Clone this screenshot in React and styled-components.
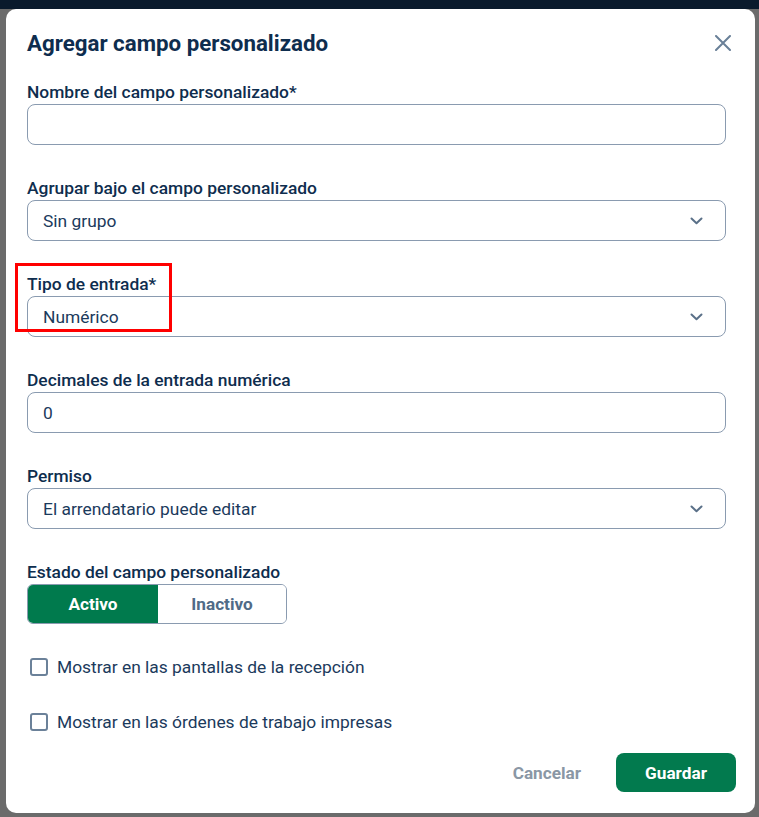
import React from "react";
import styled, { createGlobalStyle } from "styled-components";

const Global = createGlobalStyle`
  html, body { margin: 0; padding: 0; }
  body { font-family: Roboto, "Noto Sans", "Liberation Sans", sans-serif; }
  * { box-sizing: border-box; }
`;

const Backdrop = styled.div`
  width: 759px;
  height: 817px;
  background: linear-gradient(#0a1a2c 0 9px, #6b6b6b 9px 100%);
  padding: 9px 4px 4px 6px;
  display: flex;
  position: relative;
  overflow: hidden;
`;

const Modal = styled.div`
  flex: 1;
  background: #fff;
  border-radius: 10px;
  display: flex;
  flex-direction: column;
  padding: 20px 0 21px 21px;
`;

const Header = styled.div`
  display: flex;
  align-items: center;
  justify-content: space-between;
  padding-right: 24px;
  height: 28px;
`;

const Title = styled.h2`
  margin: 0;
  font-size: 22.3px;
  line-height: 28px;
  font-weight: 700;
  color: #0e2d4e;
`;

const CloseBtn = styled.button`
  border: 0;
  background: none;
  padding: 0;
  width: 16px;
  height: 16px;
  display: flex;
  cursor: pointer;
`;

const Body = styled.div`
  padding-right: 29px;
  margin-top: 25px;
  display: flex;
  flex-direction: column;
`;

const Field = styled.div`
  display: flex;
  flex-direction: column;
  margin-bottom: ${p => p.$mb ?? 33}px;
`;

const Label = styled.label`
  font-size: 17.4px;
  line-height: 20px;
  font-weight: 500;
  color: #0e2d4e;
  margin-bottom: 2px;
`;

const Box = styled.div`
  height: 41px;
  border: 1px solid #8a9bb0;
  border-radius: 8px;
  display: flex;
  align-items: center;
  justify-content: space-between;
  padding: 0 22px 0 15px;
  font-size: 17.4px;
  color: #1b3a5c;
`;

const Toggle = styled.div`
  display: flex;
  width: 260px;
  height: 40px;
  border: 1px solid #8a9bb0;
  border-radius: 6px;
  overflow: hidden;
`;

const ToggleOpt = styled.div`
  flex: ${p => (p.$active ? "0 0 130px" : "1")};
  display: flex;
  align-items: center;
  justify-content: center;
  font-size: 17.2px;
  font-weight: 700;
  background: ${p => (p.$active ? "#007a4d" : "#fff")};
  color: ${p => (p.$active ? "#fff" : "#506b87")};
`;

const CheckRow = styled.label`
  display: flex;
  align-items: center;
  gap: 9px;
  height: 24px;
  padding-left: 3px;
  margin-top: ${p => p.$mt}px;
  font-size: 17.4px;
  color: #1b3a5c;
`;

const CheckBox = styled.span`
  width: 18px;
  height: 18px;
  border: 2px solid #6b8199;
  border-radius: 3px;
  display: inline-block;
`;

const Footer = styled.div`
  margin-top: auto;
  display: flex;
  justify-content: flex-end;
  align-items: center;
  gap: 35px;
  padding-right: 19px;
`;

const TextBtn = styled.button`
  border: 0;
  background: none;
  font-family: inherit;
  font-size: 17.2px;
  font-weight: 700;
  color: #8a97a5;
  padding: 0;
`;

const PrimaryBtn = styled.button`
  border: 0;
  width: 120px;
  height: 39px;
  border-radius: 8px;
  background: #027a4e;
  color: #fff;
  font-family: inherit;
  font-size: 17.2px;
  font-weight: 700;
`;

const Highlight = styled.div`
  position: absolute;
  left: 15px;
  top: 263px;
  width: 157px;
  height: 69px;
  border: 3px solid #ff0000;
  pointer-events: none;
`;

const Chevron = () => (
  <svg width="13" height="8" viewBox="0 0 13 8">
    <polyline points="1.5,1.5 6.5,6.2 11.5,1.5" fill="none" stroke="#5a7088" strokeWidth="2" strokeLinecap="round" strokeLinejoin="round" />
  </svg>
);

const CloseIcon = () => (
  <svg width="16" height="16" viewBox="0 0 16 16">
    <path d="M1 1L15 15M15 1L1 15" stroke="#6a8098" strokeWidth="2" strokeLinecap="round" />
  </svg>
);

export default function App() {
  return (
    <>
      <Global />
      <Backdrop>
        <Modal>
          <Header>
            <Title>Agregar campo personalizado</Title>
            <CloseBtn aria-label="Cerrar"><CloseIcon /></CloseBtn>
          </Header>
          <Body>
            <Field>
              <Label>Nombre del campo personalizado*</Label>
              <Box />
            </Field>
            <Field>
              <Label>Agrupar bajo el campo personalizado</Label>
              <Box>Sin grupo<Chevron /></Box>
            </Field>
            <Field>
              <Label>Tipo de entrada*</Label>
              <Box>Numérico<Chevron /></Box>
            </Field>
            <Field>
              <Label>Decimales de la entrada numérica</Label>
              <Box>0</Box>
            </Field>
            <Field>
              <Label>Permiso</Label>
              <Box>El arrendatario puede editar<Chevron /></Box>
            </Field>
            <Field $mb={0}>
              <Label>Estado del campo personalizado</Label>
              <Toggle>
                <ToggleOpt $active>Activo</ToggleOpt>
                <ToggleOpt>Inactivo</ToggleOpt>
              </Toggle>
            </Field>
            <CheckRow $mt={31}><CheckBox />Mostrar en las pantallas de la recepción</CheckRow>
            <CheckRow $mt={31}><CheckBox />Mostrar en las órdenes de trabajo impresas</CheckRow>
          </Body>
          <Footer>
            <TextBtn>Cancelar</TextBtn>
            <PrimaryBtn>Guardar</PrimaryBtn>
          </Footer>
        </Modal>
        <Highlight />
      </Backdrop>
    </>
  );
}
